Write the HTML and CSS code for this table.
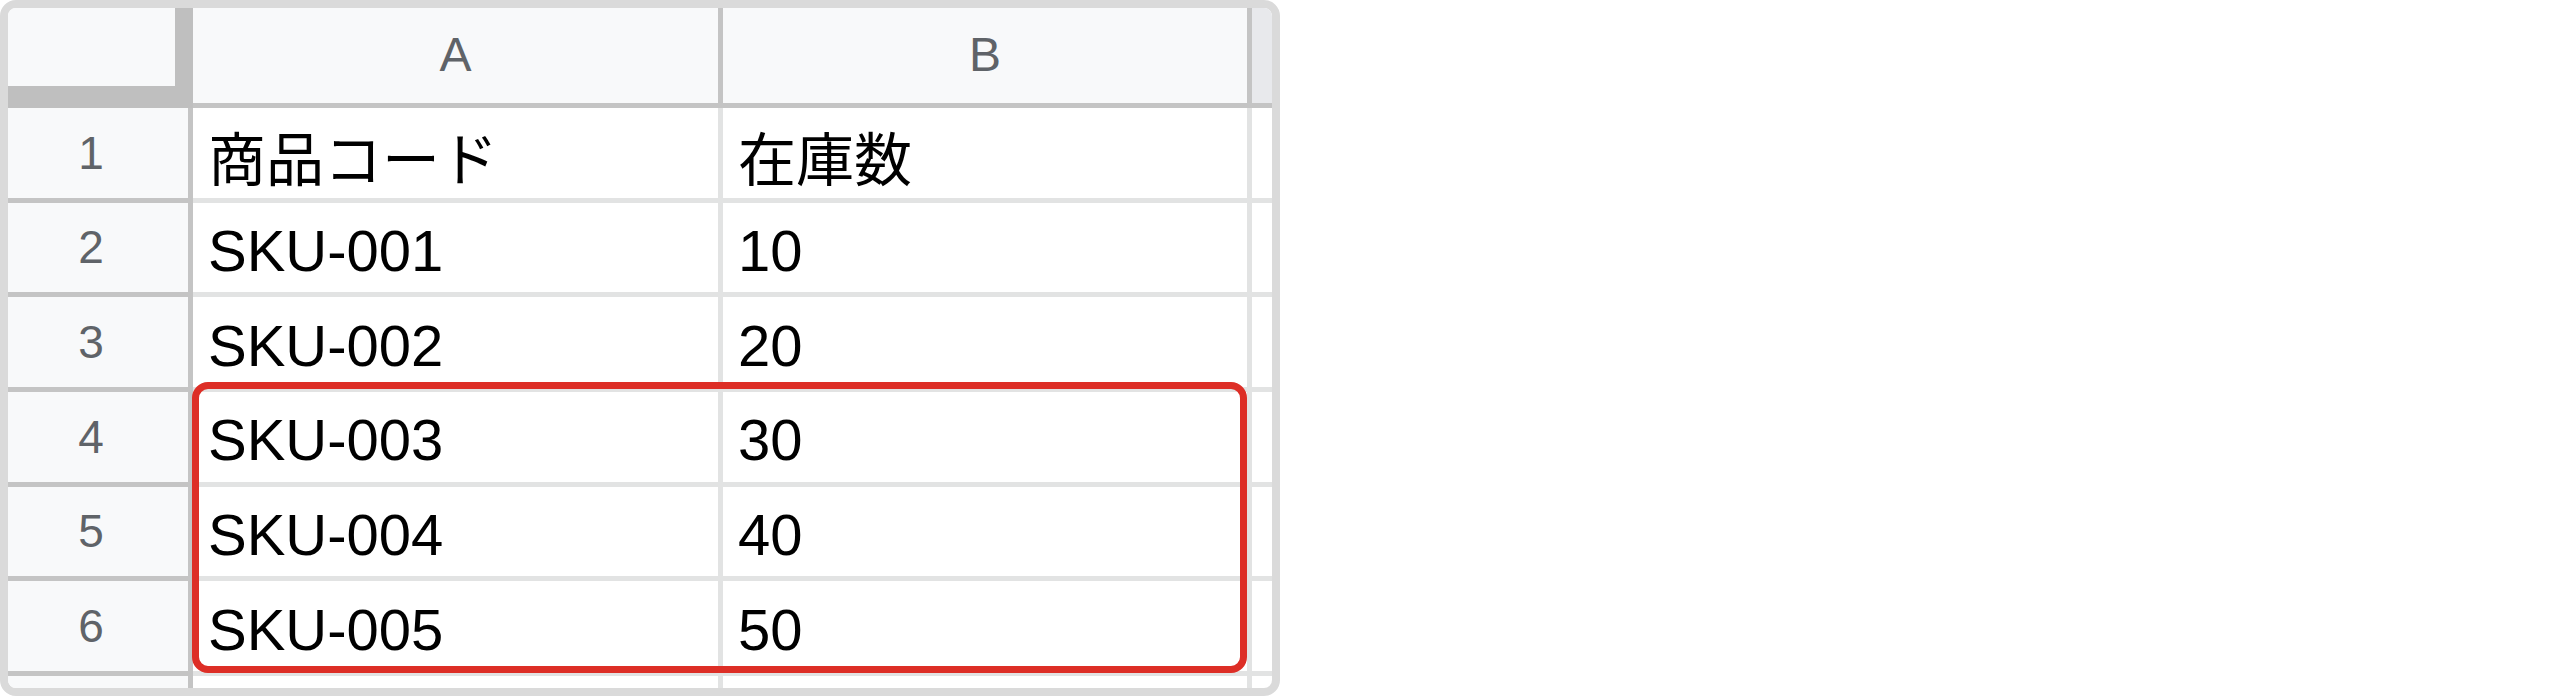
FILE: index.html
```html
<!DOCTYPE html>
<html lang="ja">
<head>
    <meta charset="UTF-8">
    <title>在庫</title>
    <link rel="stylesheet" href="styles.css">
</head>
<body>
    <div id="sheet">
        <div class="grid">
            <div class="corner"></div>
            <div class="col-head">A</div>
            <div class="col-head">B</div>
            <div class="col-head col-rest"></div>

            <div class="row-head">1</div>
            <div class="cell">商品コード</div>
            <div class="cell">在庫数</div>
            <div class="cell cell-rest"></div>

            <div class="row-head">2</div>
            <div class="cell">SKU-001</div>
            <div class="cell">10</div>
            <div class="cell cell-rest"></div>

            <div class="row-head">3</div>
            <div class="cell">SKU-002</div>
            <div class="cell">20</div>
            <div class="cell cell-rest"></div>

            <div class="row-head">4</div>
            <div class="cell">SKU-003</div>
            <div class="cell">30</div>
            <div class="cell cell-rest"></div>

            <div class="row-head">5</div>
            <div class="cell">SKU-004</div>
            <div class="cell">40</div>
            <div class="cell cell-rest"></div>

            <div class="row-head">6</div>
            <div class="cell">SKU-005</div>
            <div class="cell">50</div>
            <div class="cell cell-rest"></div>

            <div class="row-head row-cut"></div>
            <div class="cell row-cut"></div>
            <div class="cell row-cut"></div>
            <div class="cell cell-rest row-cut"></div>
        </div>
        <div id="mark"></div>
    </div>
</body>
</html>
```

FILE: styles.css
```css
*{
    margin: 0;
    padding: 0;
    box-sizing: border-box;
}
body{
    background: #fff;
    font-family: "Liberation Sans", Arial, "Noto Sans CJK JP", sans-serif;
}
#sheet{
    position: relative;
    width: 1280px;
    height: 696px;
    border: 8px solid #dadada;
    border-radius: 16px;
    overflow: hidden;
    background: #fff;
}
.grid{
    display: grid;
    grid-template-columns: 185px 530px 529px 20px;
    grid-template-rows: 100px repeat(6, 94.67px) 1fr;
    height: 100%;
}
.corner{
    background: #f8f9fa;
    border-right: 18px solid #bfbfbf;
    border-bottom: 22px solid #bfbfbf;
}
.col-head{
    display: flex;
    align-items: center;
    justify-content: center;
    padding-bottom: 2px;
    background: #f8f9fa;
    color: #5f6368;
    font-size: 48px;
    border-right: 5px solid #c4c4c4;
    border-bottom: 5px solid #c4c4c4;
}
.col-head.col-rest{
    background: #e8e9ec;
    border-right: none;
}
.row-head{
    display: flex;
    align-items: center;
    justify-content: center;
    padding-right: 14px;
    background: #f8f9fa;
    color: #5f6368;
    font-size: 46px;
    border-right: 5px solid #c4c4c4;
    border-bottom: 5px solid #c4c4c4;
}
.cell{
    display: flex;
    align-items: center;
    padding: 6px 0 0 15px;
    color: #000;
    font-size: 58px;
    white-space: nowrap;
    border-right: 5px solid #e2e3e3;
    border-bottom: 5px solid #e2e3e3;
}
.cell.cell-rest{
    border-right: none;
}
.row-cut{
    border-bottom: none;
}
#mark{
    position: absolute;
    left: 184px;
    top: 374px;
    width: 1055px;
    height: 291px;
    border: 7px solid #dd2e26;
    border-radius: 16px;
}
```
